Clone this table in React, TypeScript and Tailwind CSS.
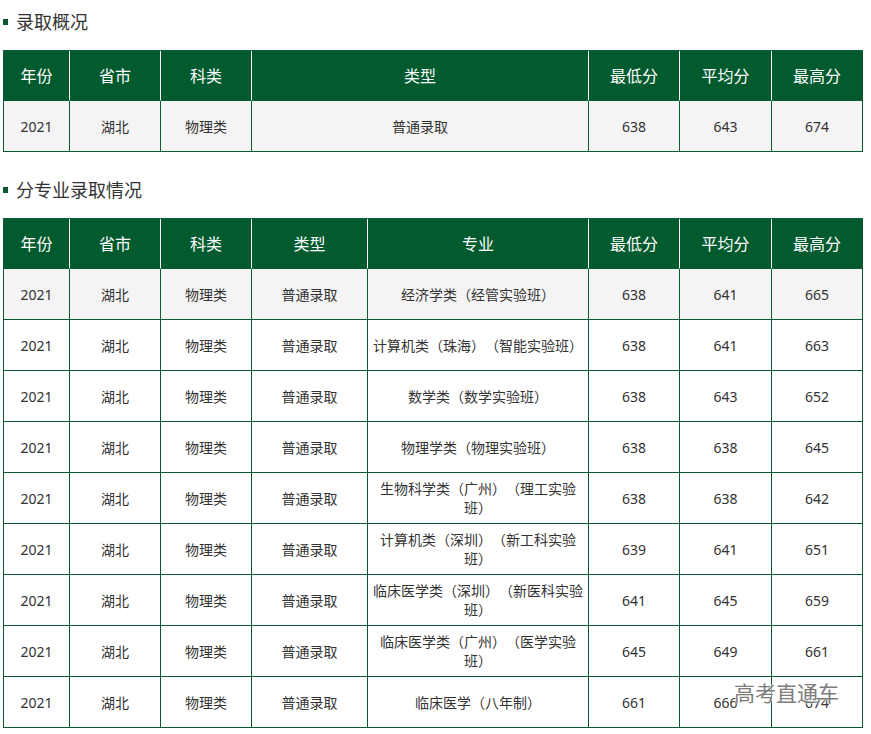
import React from "react";

const font = { fontFamily: '"Noto Sans", "Noto Sans CJK SC", sans-serif' };

type Row = string[];

const summaryHead = ["年份", "省市", "科类", "类型", "最低分", "平均分", "最高分"];
const summaryWidths = ["w-[66px]", "w-[91px]", "w-[91px]", "w-[337px]", "w-[91px]", "w-[92px]", "w-[91px]"];
const summaryRows: Row[] = [["2021", "湖北", "物理类", "普通录取", "638", "643", "674"]];

const majorHead = ["年份", "省市", "科类", "类型", "专业", "最低分", "平均分", "最高分"];
const majorWidths = ["w-[66px]", "w-[91px]", "w-[91px]", "w-[116px]", "w-[221px]", "w-[91px]", "w-[92px]", "w-[91px]"];
const majorRows: Row[] = [
  ["2021", "湖北", "物理类", "普通录取", "经济学类（经管实验班）", "638", "641", "665"],
  ["2021", "湖北", "物理类", "普通录取", "计算机类（珠海）（智能实验班）", "638", "641", "663"],
  ["2021", "湖北", "物理类", "普通录取", "数学类（数学实验班）", "638", "643", "652"],
  ["2021", "湖北", "物理类", "普通录取", "物理学类（物理实验班）", "638", "638", "645"],
  ["2021", "湖北", "物理类", "普通录取", "生物科学类（广州）（理工实验班）", "638", "638", "642"],
  ["2021", "湖北", "物理类", "普通录取", "计算机类（深圳）（新工科实验班）", "639", "641", "651"],
  ["2021", "湖北", "物理类", "普通录取", "临床医学类（深圳）（新医科实验班）", "641", "645", "659"],
  ["2021", "湖北", "物理类", "普通录取", "临床医学类（广州）（医学实验班）", "645", "649", "661"],
  ["2021", "湖北", "物理类", "普通录取", "临床医学（八年制）", "661", "666", "674"],
];

function Title({ text, className }: { text: string; className?: string }) {
  return (
    <div className={`flex items-center h-[44px] ${className ?? ""}`}>
      <span className="w-[5px] h-[6px] bg-[#0b5a31] mr-[8px]" />
      <span className="text-[18px] leading-none text-[#333]">{text}</span>
    </div>
  );
}

function ScoreTable({ head, widths, rows }: { head: string[]; widths: string[]; rows: Row[] }) {
  return (
    <table className="table-fixed border-separate border-spacing-0 border-l border-t border-[#0b5a31] w-[860px]">
      <colgroup>
        {widths.map((w, i) => (
          <col key={i} className={w} />
        ))}
      </colgroup>
      <thead>
        <tr>
          {head.map((h, i) => (
            <th
              key={h}
              className={`h-[50px] bg-[#025a2f] text-white text-[16px] font-normal border-b border-b-[#0b5a31] border-r ${
                i === head.length - 1 ? "border-r-[#0b5a31]" : "border-r-white"
              }`}
            >
              {h}
            </th>
          ))}
        </tr>
      </thead>
      <tbody>
        {rows.map((r, ri) => (
          <tr key={ri} className={ri === 0 ? "bg-[#f4f4f4]" : "bg-white"}>
            {r.map((c, ci) => (
              <td
                key={ci}
                className="h-[51px] px-[4px] text-center text-[14px] leading-[19px] text-[#333] border-r border-b border-[#0b5a31] [text-spacing-trim:space-all]"
              >
                {c}
              </td>
            ))}
          </tr>
        ))}
      </tbody>
    </table>
  );
}

export default function App() {
  return (
    <div className="relative w-[871px] h-[734px] bg-white px-[3px] overflow-hidden" style={font}>
      <Title text="录取概况" />
      <div className="mt-[6px]">
        <ScoreTable head={summaryHead} widths={summaryWidths} rows={summaryRows} />
      </div>
      <Title text="分专业录取情况" className="mt-[16px]" />
      <div className="mt-[6px]">
        <ScoreTable head={majorHead} widths={majorWidths} rows={majorRows} />
      </div>
      <div className="absolute left-[734px] top-[680px] text-[21px] leading-[26px] text-[#7d7d7d] [text-shadow:0_0_2px_#fff,0_0_2px_#fff]">
        高考直通车
      </div>
    </div>
  );
}
